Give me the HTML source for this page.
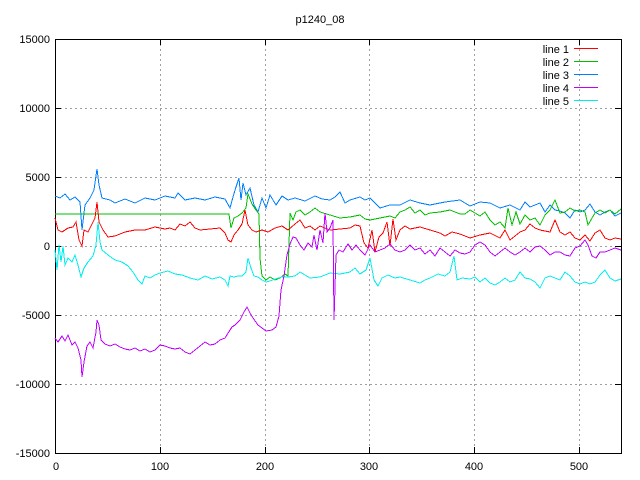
<!DOCTYPE html>
<html><head><meta charset="utf-8"><style>
html,body{margin:0;padding:0;background:#fff}
svg{display:block}
text{font-family:"Liberation Sans",sans-serif;font-size:11px;fill:#000}
</style></head><body>
<svg width="640" height="480" xmlns="http://www.w3.org/2000/svg">
<rect width="640" height="480" fill="#fff"/>
<g stroke="#a0a0a0" stroke-width="1" stroke-dasharray="2,3" fill="none" shape-rendering="crispEdges">
<path d="M55 108.5H621M55 177.5H621M55 246.5H621M55 315.5H621M55 384.5H621"/>
<path d="M160.5 39V453M265.5 39V453M369.5 39V453M474.5 39V453M579.5 39V453"/>
</g>
<g stroke="#000" stroke-width="1" fill="none" shape-rendering="crispEdges">
<rect x="55.5" y="39.5" width="566" height="414"/>
<path d="M55 108.5h6M55 177.5h6M55 246.5h6M55 315.5h6M55 384.5h6M621 108.5h-6M621 177.5h-6M621 246.5h-6M621 315.5h-6M621 384.5h-6"/>
<path d="M160.5 453v-6M265.5 453v-6M369.5 453v-6M474.5 453v-6M579.5 453v-6M160.5 39v6M265.5 39v6M369.5 39v6M474.5 39v6M579.5 39v6"/>
</g>
<text x="320" y="23" text-anchor="middle">p1240_08</text>
<g text-anchor="end">
<text x="50" y="43">15000</text><text x="50" y="112">10000</text><text x="50" y="181">5000</text>
<text x="50" y="250">0</text><text x="50" y="319">-5000</text><text x="50" y="388">-10000</text><text x="50" y="457">-15000</text>
</g>
<g text-anchor="middle">
<text x="56" y="470">0</text><text x="160" y="470">100</text><text x="265" y="470">200</text>
<text x="369" y="470">300</text><text x="474" y="470">400</text><text x="579" y="470">500</text>
</g>
<g text-anchor="end">
<text x="569" y="53">line 1</text><text x="569" y="66">line 2</text><text x="569" y="79">line 3</text>
<text x="569" y="92">line 4</text><text x="569" y="105">line 5</text>
</g>
<rect x="574" y="48" width="24" height="1" fill="#ff0000"/>
<rect x="574" y="61" width="24" height="1" fill="#00c000"/>
<rect x="574" y="74" width="24" height="1" fill="#0080ff"/>
<rect x="574" y="87" width="24" height="1" fill="#c000ff"/>
<rect x="574" y="100" width="24" height="1" fill="#00eeee"/>
<g stroke-width="1" fill="none" shape-rendering="crispEdges">
<polyline stroke="#0080ff" points="55,196 60,198 65,194 70,200 75,197 80,202 82,230 85,205 90,198 94,190 97,169 99,185 102,198 110,200 115,203 125,199 135,203 145,198 155,200 165,196 175,198 178,193 185,200 195,198 205,200 215,197 225,199 230,208 233,197 236,187 239,178 241,200 243,183 246,195 250,188 254,205 258,212 262,198 266,208 270,195 276,205 282,196 288,200 295,198 305,201 315,196 322,199 330,200 335,197 340,192 345,203 350,200 360,197 365,200 370,198 380,208 390,205 400,205 410,200 420,203 430,205 445,202 460,200 470,206 480,202 490,203 500,208 510,205 520,210 525,202 530,207 540,203 545,212 550,205 555,210 560,211 565,213 570,218 575,210 580,212 585,210 590,204 595,212 600,215 605,212 610,210 615,216 621,213"/>
<polyline stroke="#00c000" points="55,214 229,214 231,228 234,218 238,216 242,213 246,208 248,194 252,204 256,210 259,214 260,258 262,276 266,280 270,277 275,280 280,278 285,274 288,276 290,213 293,220 296,212 300,210 305,215 310,212 315,208 320,212 330,215 340,218 350,217 360,215 365,219 370,220 380,218 390,216 395,218 400,212 405,210 410,207 415,213 420,210 425,215 430,213 440,212 450,210 460,214 465,214 470,210 475,213 480,216 485,212 490,220 495,225 500,222 505,228 508,208 512,225 516,212 520,224 525,215 530,220 535,218 540,225 545,215 550,210 555,200 560,213 565,212 570,208 575,211 580,210 585,212 588,225 592,218 595,213 600,210 605,213 610,210 615,214 621,209"/>
<polyline stroke="#ff0000" points="55,218 58,230 62,232 68,228 73,227 76,222 79,240 82,246 84,230 88,232 92,224 95,218 97,202 99,222 103,230 108,237 115,236 125,232 135,230 145,230 155,227 165,229 170,228 175,230 180,224 185,226 190,222 195,228 200,230 210,229 220,228 225,233 228,240 231,242 234,235 238,230 242,224 245,210 248,225 252,230 256,232 262,230 268,232 275,228 282,226 288,230 295,224 300,220 305,228 310,226 315,230 320,226 325,228 330,230 340,229 350,228 355,225 360,226 364,243 368,248 372,230 375,252 379,237 383,233 387,222 390,246 393,219 396,240 400,230 405,226 410,229 420,227 430,230 440,233 445,236 452,232 460,234 470,238 480,235 490,233 500,238 505,230 510,240 515,236 520,232 525,230 530,224 535,228 540,230 550,232 555,220 560,232 565,235 570,232 575,238 580,240 585,235 590,241 595,233 600,230 605,238 610,240 615,238 621,239"/>
<polyline stroke="#00eeee" points="55,250 57,270 59,245 61,262 63,246 65,265 68,258 72,262 75,255 78,265 81,277 84,268 88,262 93,256 96,245 98,222 100,242 102,250 108,255 115,260 122,262 128,266 133,272 138,280 142,284 145,276 150,278 155,275 160,273 168,271 175,274 182,275 190,278 198,280 205,276 212,279 220,277 225,280 228,286 230,276 234,277 238,276 242,276 246,272 248,258 251,268 254,276 258,277 262,280 266,282 270,281 275,279 282,277 288,277 295,276 300,272 305,275 310,278 320,277 330,273 340,274 350,272 355,268 360,274 366,270 370,258 374,280 378,286 382,278 388,275 395,278 400,277 410,280 420,283 425,280 430,278 438,274 445,276 450,272 454,256 457,280 462,278 470,279 475,277 480,282 485,278 490,283 495,285 500,282 505,278 510,282 515,280 520,272 525,278 530,279 535,282 540,288 545,278 550,276 555,278 560,280 565,272 570,276 575,282 580,284 585,282 590,284 595,282 600,275 605,270 610,278 615,281 621,279"/>
<polyline stroke="#c000ff" points="55,338 58,342 62,336 65,341 68,335 72,345 75,342 78,348 81,360 82,377 84,362 87,346 90,342 93,348 96,332 97,320 99,325 101,340 105,344 110,346 115,344 120,347 125,349 130,350 135,348 140,351 145,349 150,352 155,350 160,345 165,346 170,348 175,349 180,348 185,352 190,354 195,350 200,346 205,342 210,345 215,344 220,340 225,338 230,330 232,327 235,325 240,320 244,312 247,307 250,313 253,318 258,325 262,328 266,331 272,330 276,327 279,316 281,290 284,276 287,255 290,244 293,237 296,238 300,245 304,250 308,243 312,247 314,235 317,250 320,230 323,243 325,213 327,232 330,228 333,220 334,320 336,255 339,250 343,252 348,244 352,250 356,245 360,250 365,255 370,245 375,252 380,250 385,248 390,244 395,250 400,252 405,250 410,245 415,250 420,248 425,254 430,250 435,256 440,248 445,252 450,256 455,250 460,253 465,254 470,252 475,245 480,242 485,245 490,252 495,256 500,252 505,248 510,252 515,255 520,252 525,248 530,252 535,247 540,246 545,250 550,255 555,252 560,252 565,255 570,256 575,248 580,246 585,240 588,245 592,256 596,258 600,252 605,252 610,250 615,248 621,250"/>
</g>
</svg>
</body></html>
